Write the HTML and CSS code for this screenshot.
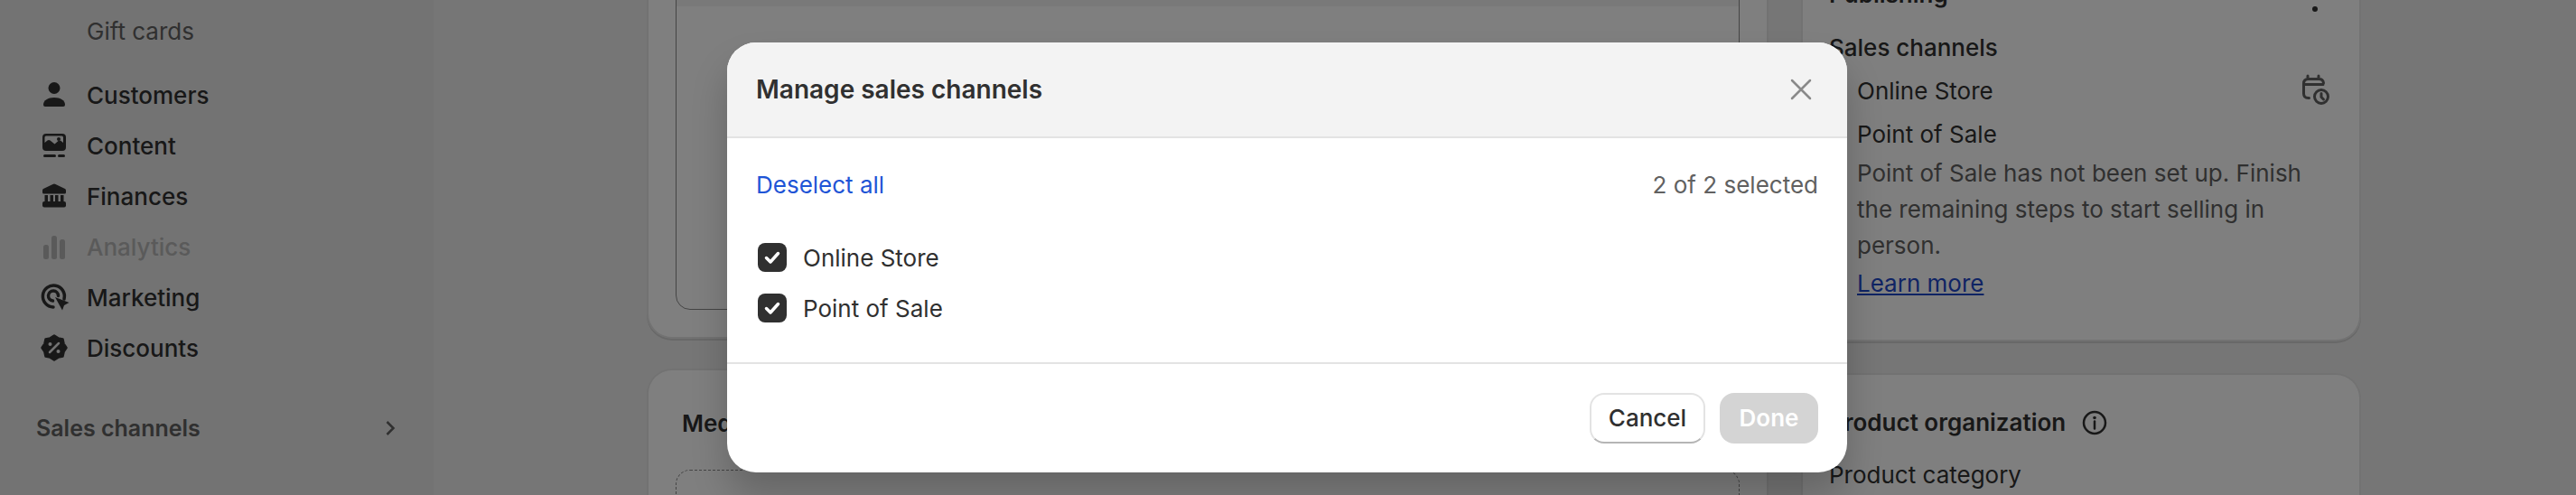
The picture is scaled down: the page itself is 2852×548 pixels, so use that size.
FILE: index.html
```html
<!DOCTYPE html>
<html lang="en">
<head>
<meta charset="utf-8">
<title>Manage sales channels</title>
<link rel="stylesheet" href="styles.css">
</head>
<body>
<div class="page">
  <aside class="sidebar">
    <div class="nav-sub">Gift cards</div>
    <nav class="nav">
      <div class="nav-row">
        <svg class="nav-icon" viewBox="0 0 40 40"><circle cx="20" cy="12.5" r="6.5"/><path d="M8 31c0-5 5-8 12-8s12 3 12 8q0 2-2 2H10q-2 0-2-2z"/></svg>
        <span>Customers</span>
      </div>
      <div class="nav-row">
        <svg class="nav-icon" viewBox="0 0 40 40"><path fill-rule="evenodd" d="M11 7h18a4 4 0 0 1 4 4v11a4 4 0 0 1-4 4H11a4 4 0 0 1-4-4V11a4 4 0 0 1 4-4zM11 9.500a1.500 1.500 0 0 0-1.500 1.500v6l3-2.500q1.500-1 3 0l5 4 4-3.500q1.500-1 3 0l2.500 2V11a1.500 1.500 0 0 0-1.500-1.500z"/><circle cx="25" cy="13" r="2"/><rect x="8" y="30" width="14" height="3" rx="1.500"/><rect x="24" y="30" width="8" height="3" rx="1.500"/></svg>
        <span>Content</span>
      </div>
      <div class="nav-row">
        <svg class="nav-icon" viewBox="0 0 40 40"><path d="M18.500 7q1.500-.8 3 0l10.500 5q1 .5 1 2v2q0 1.500-1.500 1.500h-23Q7 17.500 7 16v-2q0-1.500 1-2z"/><rect x="9.500" y="19" width="3.500" height="8"/><rect x="15.500" y="19" width="3.500" height="8"/><rect x="21" y="19" width="3.500" height="8"/><rect x="27" y="19" width="3.500" height="8"/><rect x="7" y="26" width="26" height="6.500" rx="2"/></svg>
        <span>Finances</span>
      </div>
      <div class="nav-row nav-row-muted">
        <svg class="nav-icon" viewBox="0 0 40 40"><rect x="8" y="18" width="6" height="16" rx="2.500"/><rect x="17" y="8" width="6" height="26" rx="2.500"/><rect x="26" y="12" width="6" height="22" rx="2.500"/></svg>
        <span>Analytics</span>
      </div>
      <div class="nav-row">
        <svg class="nav-icon" viewBox="0 0 40 40"><path class="nav-stroke" d="M31 22a12 12 0 1 0-12 9"/><path class="nav-stroke" d="M24.500 18.500a5.500 5.500 0 1 0-6 5.500"/><path d="M21 20l15.500 6-5.500 3-2 5.500z"/></svg>
        <span>Marketing</span>
      </div>
      <div class="nav-row">
        <svg class="nav-icon" viewBox="0 0 40 40"><polygon class="badge" points="33.500,20 30.600,24.400 29.500,29.500 24.400,30.600 20,33.500 15.600,30.600 10.500,29.500 9.400,24.400 6.500,20 9.400,15.600 10.500,10.500 15.600,9.400 20,6.500 24.400,9.400 29.500,10.500 30.600,15.600"/><path class="badge-cut" d="M25 15L15 25"/><circle class="badge-dot" cx="15.500" cy="16" r="2"/><circle class="badge-dot" cx="24.500" cy="24" r="2"/></svg>
        <span>Discounts</span>
      </div>
    </nav>
    <div class="nav-section">
      <span>Sales channels</span>
      <svg class="chevron" viewBox="0 0 12 18"><path d="M2.500 2l7 7-7 7"/></svg>
    </div>
  </aside>

  <main class="main">
    <div class="col col-left">
      <section class="card card-editor">
        <div class="editor">
          <div class="editor-bar"></div>
        </div>
      </section>
      <section class="card card-media">
        <h2 class="card-title">Media</h2>
        <div class="dropzone"></div>
      </section>
    </div>
    <div class="col col-right">
      <section class="card card-publish">
        <div class="card-head">
          <h2 class="card-title">Publishing</h2>
          <svg class="dots" viewBox="0 0 8 40"><circle cx="4" cy="4" r="3"/><circle cx="4" cy="20" r="3"/><circle cx="4" cy="36" r="3"/></svg>
        </div>
        <div class="sub-title">Sales channels</div>
        <div class="channel">
          <span>Online Store</span>
          <svg class="schedule" viewBox="0 0 40 40"><path d="M12.500 28.500h-1q-5 0-5-5V12.500q0-5 5-5h12q4.500 0 5 4.500M7 13.500h21M11 4v3M23 4v3"/><circle cx="26" cy="27" r="7.500"/><path d="M26 23.500v4l2.500 2.500"/></svg>
        </div>
        <div class="channel"><span>Point of Sale</span></div>
        <p class="channel-note">Point of Sale has not been set up. Finish the remaining steps to start selling in person.</p>
        <a class="channel-link" href="#">Learn more</a>
      </section>
      <section class="card card-org">
        <h2 class="card-title org-title">Product organization
          <svg class="info" viewBox="0 0 28 28"><circle cx="14" cy="14" r="12"/><path d="M14 12.500v8"/><circle class="info-dot" cx="14" cy="8.500" r="1.800"/></svg>
        </h2>
        <div class="org-label">Product category</div>
      </section>
    </div>
  </main>
</div>

<div class="scrim"></div>
<div class="modal">
  <header class="modal-head">
    <h1 class="modal-title">Manage sales channels</h1>
    <svg class="close" viewBox="0 0 24 24"><path d="M2 2l20 20M22 2L2 22"/></svg>
  </header>
  <div class="modal-body">
    <div class="modal-tools">
      <a class="link" href="#">Deselect all</a>
      <span class="count">2 of 2 selected</span>
    </div>
    <ul class="checks">
      <li class="check"><svg class="box" viewBox="0 0 32 32"><rect width="32" height="32" rx="8"/><path d="M9.500 16.500l4.500 4.500 8.500-9.500"/></svg><span>Online Store</span></li>
      <li class="check"><svg class="box" viewBox="0 0 32 32"><rect width="32" height="32" rx="8"/><path d="M9.500 16.500l4.500 4.500 8.500-9.500"/></svg><span>Point of Sale</span></li>
    </ul>
  </div>
  <footer class="modal-foot">
    <button class="btn btn-cancel" type="button">Cancel</button>
    <button class="btn btn-done" type="button">Done</button>
  </footer>
</div>
</body>
</html>
```
FILE: styles.css
```css
* { box-sizing: border-box; }
html, body { margin: 0; padding: 0; }
body {
  width: 2852px;
  height: 548px;
  overflow: hidden;
  position: relative;
  font-family: Inter, "Liberation Sans", sans-serif;
  font-size: 26px;
  color: #303030;
  background: #ededed;
}
h1, h2, p, ul { margin: 0; padding: 0; }
ul { list-style: none; }

.page { display: flex; height: 548px; overflow: hidden; }

/* sidebar */
.sidebar { width: 480px; flex: none; background: #e6e6e6; padding-top: 15px; }
.nav-sub { padding-left: 96px; line-height: 40px; color: #616161; font-weight: 400; }
.nav { margin-top: 22px; }
.nav-row { height: 56px; display: flex; align-items: center; font-weight: 500; padding-left: 40px; gap: 16px; }
.nav-row-muted { color: #b5b5b5; }
.nav-icon { width: 40px; height: 40px; flex: none; fill: currentColor; }
.nav-stroke { fill: none; stroke: currentColor; stroke-width: 3.5; stroke-linecap: round; }
.badge { stroke: currentColor; stroke-width: 2.500; stroke-linejoin: round; }
.badge-cut { stroke: #e6e6e6; stroke-width: 2.500; stroke-linecap: round; }
.badge-dot { fill: #e6e6e6; }
.nav-section { margin-top: 41px; padding: 0 42px 0 40px; display: flex; justify-content: space-between; align-items: center; font-weight: 600; font-size: 25px; color: #616161; line-height: 40px; }
.chevron { width: 12px; height: 18px; fill: none; stroke: #616161; stroke-width: 2.500; }

/* main */
.main { flex: 1; display: flex; gap: 36px; padding-left: 236px; }
.col { display: flex; flex-direction: column; flex: none; }
.col-left { width: 1242px; gap: 33px; }
.col-right { width: 620px; gap: 35px; }
.card { background: #fff; border-radius: 28px; padding: 32px; box-shadow: 0 2px 0 rgba(0,0,0,.12), inset 0 0 0 2px rgba(0,0,0,.1); }
.card-title { font-size: 26px; line-height: 40px; font-weight: 600; }

.card-editor { height: 500px; margin-top: -125px; flex: none; }
.editor { height: 436px; border: 1px solid #8a8a8a; border-radius: 16px; overflow: hidden; }
.editor-bar { height: 99px; background: #f3f3f3; }

.card-media { flex: none; height: 300px; padding-top: 41px; }
.card-media .card-title { padding-left: 7px; }
.dropzone { margin-top: 31px; height: 200px; border: 1px dashed #8a8a8a; border-radius: 16px; }

.card-publish { flex: none; margin-top: -58px; padding: 32px 32px 44px 31px; }
.card-head { display: flex; justify-content: space-between; align-items: flex-start; padding-right: 15px; height: 59px; }
.dots { width: 8px; height: 40px; fill: #303030; margin-top: 0; }
.sub-title { line-height: 40px; font-weight: 500; }
.channel { display: flex; justify-content: space-between; align-items: center; height: 48px; padding-left: 31px; margin-top: 3px; }
.channel + .channel { margin-top: 0; }
.schedule { width: 40px; height: 40px; fill: none; stroke: #616161; stroke-width: 3; stroke-linecap: round; flex: none; margin-right: -2px; }
.channel-note { padding-left: 31px; line-height: 40px; color: #616161; max-width: 540px; margin-top: 0; }
.channel-link { display: block; margin-left: 31px; margin-top: 2px; line-height: 40px; color: #1f48c8; }

.card-org { flex: none; height: 300px; padding-left: 31px; }
.org-title { display: flex; align-items: center; gap: 18px; margin-top: 3px; }
.info { width: 28px; height: 28px; fill: none; stroke: #303030; stroke-width: 2.500; stroke-linecap: round; }
.info-dot { fill: #303030; stroke: none; }
.org-label { margin-top: 18px; line-height: 40px; }

/* overlay */
.scrim { position: absolute; inset: 0; background: rgba(0,0,0,.5); }
.modal {
  position: absolute;
  left: 805px;
  top: 47px;
  width: 1240px;
  background: #fff;
  border-radius: 32px;
  overflow: hidden;
  box-shadow: 0 26px 40px rgba(0,0,0,.2);
}
.modal-head { height: 106px; background: #f3f3f3; border-bottom: 2px solid #e3e3e3; display: flex; align-items: center; justify-content: space-between; padding: 0 39px 0 32px; }
.modal-title { font-size: 28px; font-weight: 600; line-height: 40px; color: #303030; }
.close { width: 24px; height: 24px; fill: none; stroke: #8a8a8a; stroke-width: 2.500; stroke-linecap: round; }
.modal-body { height: 248px; padding: 32px 32px 0; }
.modal-tools { display: flex; justify-content: space-between; line-height: 40px; }
.link { color: #1f55d6; text-decoration: none; }
.count { color: #616161; }
.checks { margin-top: 44px; display: flex; flex-direction: column; gap: 24px; }
.check { display: flex; align-items: center; gap: 18px; padding-left: 2px; height: 32px; }
.box { width: 32px; height: 32px; flex: none; }
.box rect { fill: #303030; }
.box path { fill: none; stroke: #fff; stroke-width: 3.5; stroke-linecap: round; stroke-linejoin: round; }
.modal-foot { height: 122px; border-top: 2px solid #e3e3e3; display: flex; justify-content: flex-end; gap: 16px; padding: 32px; }
.btn { height: 56px; border-radius: 16px; font: 500 26px Inter, "Liberation Sans", sans-serif; padding: 0 0 1px; }
.btn-cancel { width: 128px; background: #fff; color: #303030; border: 2px solid #e3e3e3; border-bottom-color: #b5b5b5; }
.btn-done { width: 109px; background: #d4d4d4; color: #fff; border: none; font-weight: 600; }
```
